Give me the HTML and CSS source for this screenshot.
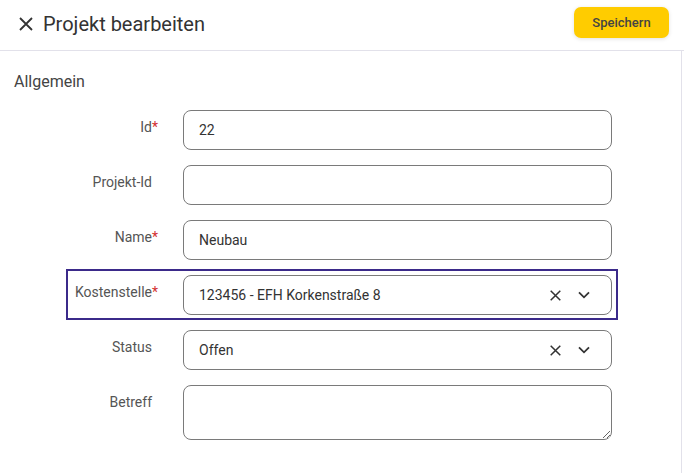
FILE: index.html
```html
<!DOCTYPE html>
<html lang="de">

<head>
    <meta charset="UTF-8">
    <meta name="viewport" content="width=device-width, initial-scale=1.0">
    <title>Projekt bearbeiten</title>
    <link rel="stylesheet" href="styles.css">
</head>

<body>
    <header class="topbar">
        <div class="topbar-title">
            <svg class="close-icon" width="14" height="14" viewBox="0 0 14 14">
                <path d="M1 1L13 13M13 1L1 13" stroke="#333" stroke-width="1.8" fill="none" />
            </svg>
            <h1>Projekt bearbeiten</h1>
        </div>
        <button class="btn-save">Speichern</button>
    </header>

    <main class="panel">
        <h2 class="section-title">Allgemein</h2>

        <div class="form-row">
            <label class="form-label">Id<span class="req">*</span></label>
            <input class="form-input" type="text" value="22">
        </div>

        <div class="form-row">
            <label class="form-label">Projekt-Id</label>
            <input class="form-input" type="text" value="">
        </div>

        <div class="form-row">
            <label class="form-label">Name<span class="req">*</span></label>
            <input class="form-input" type="text" value="Neubau">
        </div>

        <div class="form-row focused">
            <label class="form-label">Kostenstelle<span class="req">*</span></label>
            <div class="form-input select">
                <span class="select-value">123456 - EFH Korkenstraße 8</span>
                <svg class="select-clear" width="11" height="11" viewBox="0 0 11 11">
                    <path d="M0.7 0.7L10.3 10.3M10.3 0.7L0.7 10.3" stroke="#333" stroke-width="1.5" fill="none" />
                </svg>
                <svg class="select-arrow" width="12" height="8" viewBox="0 0 12 8">
                    <path d="M1 1.3L6 6.3L11 1.3" stroke="#333" stroke-width="1.8" fill="none" />
                </svg>
            </div>
        </div>

        <div class="form-row">
            <label class="form-label">Status</label>
            <div class="form-input select">
                <span class="select-value">Offen</span>
                <svg class="select-clear" width="11" height="11" viewBox="0 0 11 11">
                    <path d="M0.7 0.7L10.3 10.3M10.3 0.7L0.7 10.3" stroke="#333" stroke-width="1.5" fill="none" />
                </svg>
                <svg class="select-arrow" width="12" height="8" viewBox="0 0 12 8">
                    <path d="M1 1.3L6 6.3L11 1.3" stroke="#333" stroke-width="1.8" fill="none" />
                </svg>
            </div>
        </div>

        <div class="form-row">
            <label class="form-label">Betreff</label>
            <textarea class="form-input textarea"></textarea>
        </div>
    </main>
</body>

</html>
```

FILE: styles.css
```css
* {
    box-sizing: border-box;
}

body {
    margin: 0;
    font-family: Roboto, "Liberation Sans", sans-serif;
    color: #333;
    background: #fff;
}

.topbar {
    height: 51px;
    display: flex;
    align-items: center;
    justify-content: space-between;
    padding: 0 15px 0 19px;
    border-bottom: 1px solid #e2e1ea;
}

.topbar-title {
    display: flex;
    align-items: center;
    gap: 10px;
    margin-top: -3px;
}

.topbar h1 {
    margin: 0;
    font-size: 20px;
    font-weight: 400;
    color: #333;
}

.btn-save {
    width: 95px;
    height: 31px;
    margin-top: -5px;
    border: none;
    border-radius: 7px;
    background-color: #ffcc00;
    color: #444;
    font-family: Roboto, sans-serif;
    font-size: 13px;
    font-weight: 500;
    box-shadow: 0 1px 4px rgb(0 0 0 / 12%);
}

.panel {
    width: 682px;
    min-height: 422px;
    border-right: 1px solid #e2e1ea;
    padding: 21px 0 0 0;
}

.section-title {
    margin: 0 0 12px 14px;
    font-size: 16px;
    line-height: 20px;
    font-weight: 400;
    color: #444;
}

.form-row {
    width: 552px;
    margin: 0 0 4px 66px;
    padding: 4px 3px 3px 3px;
    border: 2px solid transparent;
    display: grid;
    grid-template-columns: 81px 429px;
    column-gap: 31px;
    align-items: start;
}

.form-row.focused {
    border-color: #3b2a8a;
}

.form-label {
    text-align: right;
    font-size: 14px;
    line-height: 20px;
    padding-top: 7px;
    color: #555;
    white-space: nowrap;
}

.req {
    color: #d32f2f;
    margin-right: -6px;
}

.form-input {
    height: 40px;
    width: 429px;
    border: 1px solid #7a7a7a;
    border-radius: 8px;
    padding: 0 15px;
    font-family: Roboto, sans-serif;
    font-size: 14px;
    color: #333;
    outline: none;
}

.select {
    display: flex;
    align-items: center;
    padding-right: 21px;
}

.select-value {
    flex: 1;
}

.select-clear {
    margin-right: 17px;
}

.textarea {
    height: 55px;
    display: block;
    resize: vertical;
}
```
